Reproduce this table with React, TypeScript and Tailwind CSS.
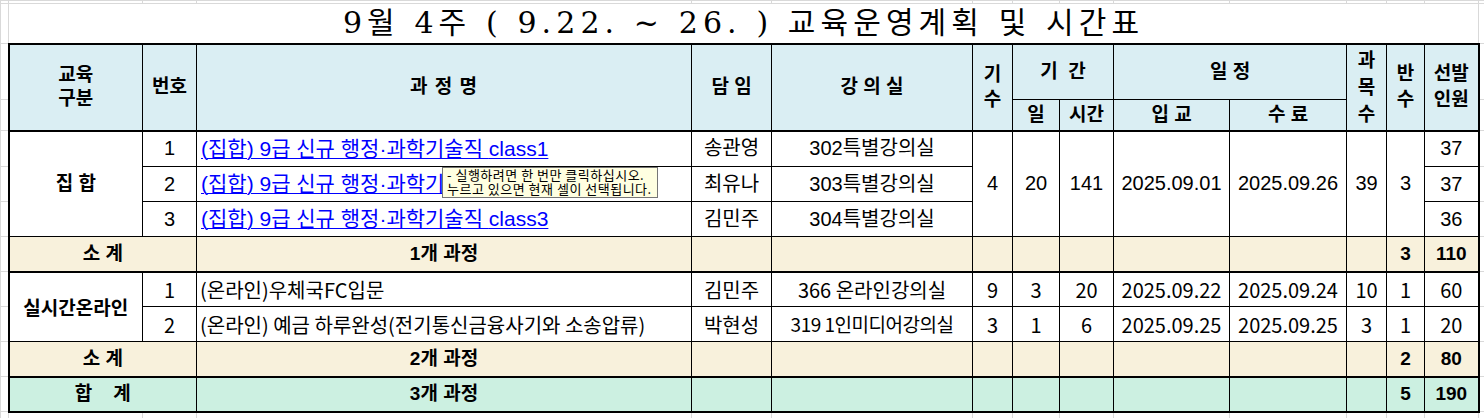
import React from 'react';

const widths = [8, 134, 54, 495, 80, 201, 40, 47, 54, 116, 117, 40, 38, 54, 6];

const grid = 'border border-[#d9d9d9]';
const head = 'border border-black bg-[#daeef3] font-bold text-center text-[19px]';
const sub = 'border border-black bg-[#f8f1dc] font-bold text-center text-[19px]';
const tot = 'border border-black border-t-2 border-b-2 bg-[#ccf0e1] font-bold text-center text-[19px]';
const base = 'border border-black text-center';
const td = `${base} text-[20px]`;
const link = 'text-[#0000ff] underline underline-offset-2 decoration-1';

function Spacers({ h }: { h: string }) {
  return (
    <tr className={h}>
      {widths.map((_, i) => (
        <td key={i} className={grid} />
      ))}
    </tr>
  );
}

function EmptyCells({ cls }: { cls: string }) {
  return (
    <>
      {[3, 4, 5, 6, 7, 8, 9, 10].map((k) => (
        <td key={k} className={cls} />
      ))}
    </>
  );
}

export default function App() {
  const courses = [
    { no: '1', name: 'class1', teacher: '송관영', room: '302특별강의실', count: '37' },
    { no: '2', name: 'class2', teacher: '최유나', room: '303특별강의실', count: '37' },
    { no: '3', name: 'class3', teacher: '김민주', room: '304특별강의실', count: '36' },
  ];

  return (
    <div
      className="relative w-[1484px] h-[418px] overflow-hidden bg-white text-black"
      style={{ fontFamily: '"Liberation Sans", "Noto Sans CJK KR", sans-serif' }}
    >
      <table className="table-fixed border-collapse w-[1484px] leading-tight">
        <colgroup>
          {widths.map((w, i) => (
            <col key={i} style={{ width: w }} />
          ))}
        </colgroup>
        <tbody>
          <Spacers h="h-[3px]" />
          <tr className="h-[40px]">
            <td className={grid} />
            <td
              colSpan={13}
              className="border border-[#d9d9d9] text-center text-[30px] leading-none tracking-[5.1px] whitespace-pre"
              style={{ fontFamily: '"DejaVu Serif", "Noto Sans CJK KR", serif' }}
            >
              9월 4주 ( 9.22. ~ 26. ) 교육운영계획 및 시간표
            </td>
            <td className={grid} />
          </tr>

          <tr className="h-[56px]">
            <td className={grid} />
            <td rowSpan={2} className={`${head} border-t-2 border-b-2 border-l-2 leading-[24px]`}>
              교육
              <br />
              구분
            </td>
            <td rowSpan={2} className={`${head} border-t-2 border-b-2`}>번호</td>
            <td rowSpan={2} className={`${head} border-t-2 border-b-2 whitespace-pre tracking-[1px]`}>과 정 명</td>
            <td rowSpan={2} className={`${head} border-t-2 border-b-2`}>담 임</td>
            <td rowSpan={2} className={`${head} border-t-2 border-b-2 whitespace-pre`}>강 의 실</td>
            <td rowSpan={2} className={`${head} border-t-2 border-b-2 leading-[25px]`}>
              기
              <br />수
            </td>
            <td colSpan={2} className={`${head} border-t-2 whitespace-pre`}>기  간</td>
            <td colSpan={2} className={`${head} border-t-2`}>일 정</td>
            <td rowSpan={2} className={`${head} border-t-2 border-b-2 leading-[27px]`}>
              과
              <br />목
              <br />수
            </td>
            <td rowSpan={2} className={`${head} border-t-2 border-b-2 leading-[26px]`}>
              반
              <br />수
            </td>
            <td rowSpan={2} className={`${head} border-t-2 border-b-2 border-r-2 leading-[26px]`}>
              선발
              <br />
              인원
            </td>
            <td className={grid} />
          </tr>
          <tr className="h-[31px]">
            <td className={grid} />
            <td className={`${head} border-b-2`}>일</td>
            <td className={`${head} border-b-2`}>시간</td>
            <td className={`${head} border-b-2`}>입 교</td>
            <td className={`${head} border-b-2`}>수 료</td>
            <td className={grid} />
          </tr>

          {courses.map((c, i) => (
            <tr key={c.no} className={i === 0 ? 'h-[36px]' : 'h-[35px]'}>
              <td className={grid} />
              {i === 0 && (
                <td rowSpan={3} className={`${base} border-l-2 font-bold text-[19px]`}>
                  집 합
                </td>
              )}
              <td className={td}>{c.no}</td>
              <td className={`${base} text-left pl-1 text-[21px] whitespace-nowrap`}>
                <span className={link}>(집합) 9급 신규 행정·과학기술직 {c.name}</span>
              </td>
              <td className={td}>{c.teacher}</td>
              <td className={td}>{c.room}</td>
              {i === 0 && (
                <>
                  <td rowSpan={3} className={td}>4</td>
                  <td rowSpan={3} className={td}>20</td>
                  <td rowSpan={3} className={td}>141</td>
                  <td rowSpan={3} className={td}>2025.09.01</td>
                  <td rowSpan={3} className={td}>2025.09.26</td>
                  <td rowSpan={3} className={td}>39</td>
                  <td rowSpan={3} className={td}>3</td>
                </>
              )}
              <td className={`${td} border-r-2`}>{c.count}</td>
              <td className={grid} />
            </tr>
          ))}

          <tr className="h-[35px]">
            <td className={grid} />
            <td colSpan={2} className={`${sub} border-l-2`}>소 계</td>
            <td className={sub}>1개 과정</td>
            <EmptyCells cls={sub} />
            <td className={sub}>3</td>
            <td className={`${sub} border-r-2`}>110</td>
            <td className={grid} />
          </tr>

          <tr className="h-[35px]" style={{ fontFamily: '"Noto Sans CJK KR", sans-serif' }}>
            <td className={grid} />
            <td rowSpan={2} className={`${base} border-t-2 border-l-2 font-bold text-[19px]`}>
              실시간온라인
            </td>
            <td className={`${td} border-t-2`}>1</td>
            <td className={`${td} border-t-2 text-left pl-[3px]`}>(온라인)우체국FC입문</td>
            <td className={`${td} border-t-2`}>김민주</td>
            <td className={`${td} border-t-2`}>366 온라인강의실</td>
            <td className={`${td} border-t-2`}>9</td>
            <td className={`${td} border-t-2`}>3</td>
            <td className={`${td} border-t-2`}>20</td>
            <td className={`${td} border-t-2`}>2025.09.22</td>
            <td className={`${td} border-t-2`}>2025.09.24</td>
            <td className={`${td} border-t-2`}>10</td>
            <td className={`${td} border-t-2`}>1</td>
            <td className={`${td} border-t-2 border-r-2`}>60</td>
            <td className={grid} />
          </tr>
          <tr className="h-[35px]" style={{ fontFamily: '"Noto Sans CJK KR", sans-serif' }}>
            <td className={grid} />
            <td className={td}>2</td>
            <td className={`${td} text-left pl-[3px] whitespace-nowrap`}>
              (온라인) 예금 하루완성(전기통신금융사기와 소송압류)
            </td>
            <td className={td}>박현성</td>
            <td className={`${base} text-[19px] tracking-[-0.5px] whitespace-nowrap`}>319 1인미디어강의실</td>
            <td className={td}>3</td>
            <td className={td}>1</td>
            <td className={td}>6</td>
            <td className={td}>2025.09.25</td>
            <td className={td}>2025.09.25</td>
            <td className={td}>3</td>
            <td className={td}>1</td>
            <td className={`${td} border-r-2`}>20</td>
            <td className={grid} />
          </tr>

          <tr className="h-[35px]">
            <td className={grid} />
            <td colSpan={2} className={`${sub} border-l-2`}>소 계</td>
            <td className={sub}>2개 과정</td>
            <EmptyCells cls={sub} />
            <td className={sub}>2</td>
            <td className={`${sub} border-r-2`}>80</td>
            <td className={grid} />
          </tr>

          <tr className="h-[35px]">
            <td className={grid} />
            <td colSpan={2} className={`${tot} border-l-2 whitespace-pre`}>합    계</td>
            <td className={tot}>3개 과정</td>
            <EmptyCells cls={tot} />
            <td className={tot}>5</td>
            <td className={`${tot} border-r-2`}>190</td>
            <td className={grid} />
          </tr>

          <Spacers h="h-[7px]" />
        </tbody>
      </table>

      <div
        className="absolute left-[442px] top-[167px] w-[216px] h-[31px] bg-[#ffffe1] border border-[#767676] pl-[4px] text-[13px] leading-[14px] tracking-[0.5px] whitespace-nowrap"
        style={{ fontFamily: '"Noto Sans CJK KR", sans-serif' }}
      >
        <div>- 실행하려면 한 번만 클릭하십시오.</div>
        <div>누르고 있으면 현재 셀이 선택됩니다.</div>
      </div>
    </div>
  );
}
